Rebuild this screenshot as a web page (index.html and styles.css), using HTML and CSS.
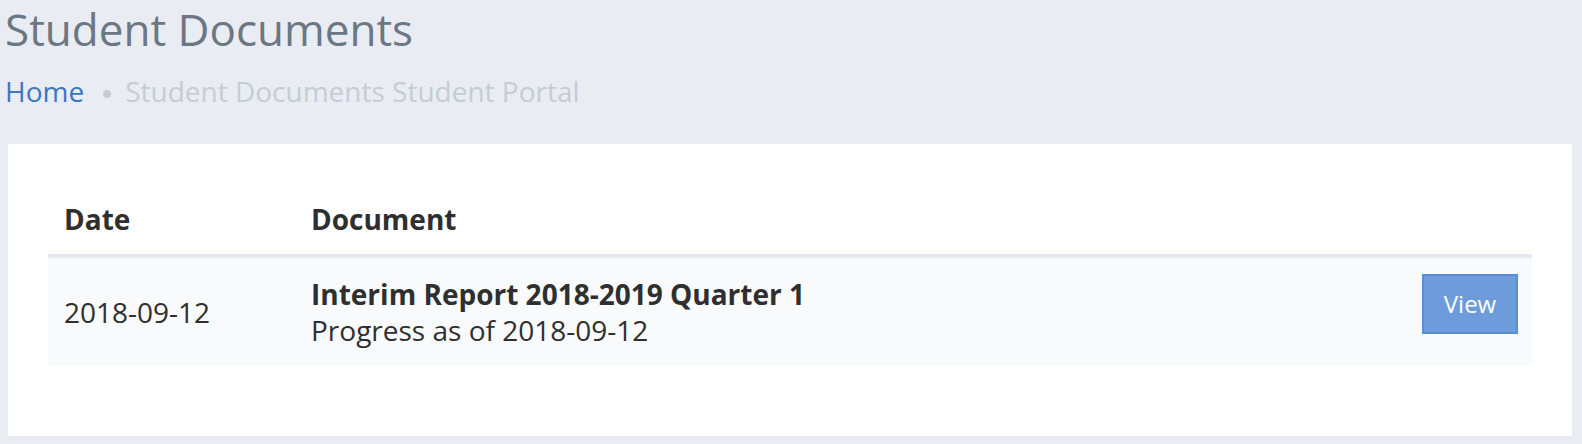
FILE: index.html
```html
<!DOCTYPE html>
<html lang="en">
<head>
<meta charset="utf-8">
<title>Student Documents</title>
<link rel="stylesheet" href="styles.css">
</head>
<body>
<div class="page">
  <header class="page-header">
    <h1 class="page-title">Student Documents</h1>
    <nav class="breadcrumb">
      <a class="crumb-link" href="#">Home</a>
      <span class="crumb-dot"></span>
      <span class="crumb-current">Student Documents Student Portal</span>
    </nav>
  </header>
  <section class="card">
    <table class="doc-table">
      <thead>
        <tr>
          <th class="col-date">Date</th>
          <th class="col-doc">Document</th>
          <th class="col-action"></th>
        </tr>
      </thead>
      <tbody>
        <tr>
          <td class="cell-date">2018-09-12</td>
          <td class="cell-doc">
            <div class="doc-title">Interim Report 2018-2019 Quarter 1</div>
            <div class="doc-sub">Progress as of 2018-09-12</div>
          </td>
          <td class="cell-action"><a class="btn-view" href="#">View</a></td>
        </tr>
      </tbody>
    </table>
  </section>
</div>
</body>
</html>
```

FILE: styles.css
```css
html, body {
  margin: 0;
  padding: 0;
  background: #e9ecf3;
}

body {
  font-family: "Open Sans", "Liberation Sans", sans-serif;
  color: #2f2f2f;
}

.page {
  padding: 0 10px 0 8px;
}

.page-header {
  padding: 5px 0 0 0;
  margin-left: -3px;
}

.page-title {
  margin: 0;
  font-size: 44px;
  line-height: 48px;
  font-weight: 400;
  color: #6b7783;
}

.breadcrumb {
  display: flex;
  align-items: center;
  margin-top: 20px;
  font-size: 28px;
  line-height: 36px;
}

.crumb-link {
  color: #3b78c2;
  text-decoration: none;
}

.crumb-dot {
  width: 8px;
  height: 8px;
  border-radius: 50%;
  background: #c6ccd4;
  margin: 6px 14px 0 19px;
}

.crumb-current {
  color: #c6ccd4;
}

.card {
  margin-top: 35px;
  background: #ffffff;
  padding: 40px 40px 40px 40px;
}

.doc-table {
  width: 100%;
  border-collapse: collapse;
  margin-bottom: 30px;
  font-size: 28px;
  line-height: 36px;
}

.doc-table th {
  text-align: left;
  font-weight: 700;
  color: #2f2f2f;
  padding: 17px 14px;
  border-bottom: 4px solid #e6e9ef;
}

.doc-table th.col-date {
  width: 219px;
  padding-left: 16px;
}

.doc-table td {
  background: #f9fafc;
  padding: 18px 14px;
  vertical-align: middle;
}

.doc-table td.cell-date {
  padding-left: 16px;
}

.doc-title {
  font-weight: 700;
}

.cell-action {
  text-align: right;
}

.doc-table td.cell-action {
  vertical-align: top;
  padding-top: 16px;
}

.btn-view {
  display: inline-block;
  box-sizing: border-box;
  width: 96px;
  height: 60px;
  line-height: 56px;
  text-align: center;
  font-size: 24px;
  color: #ffffff;
  background: #6e9bdb;
  border: 2px solid #5a8cd5;
  text-decoration: none;
}
```
